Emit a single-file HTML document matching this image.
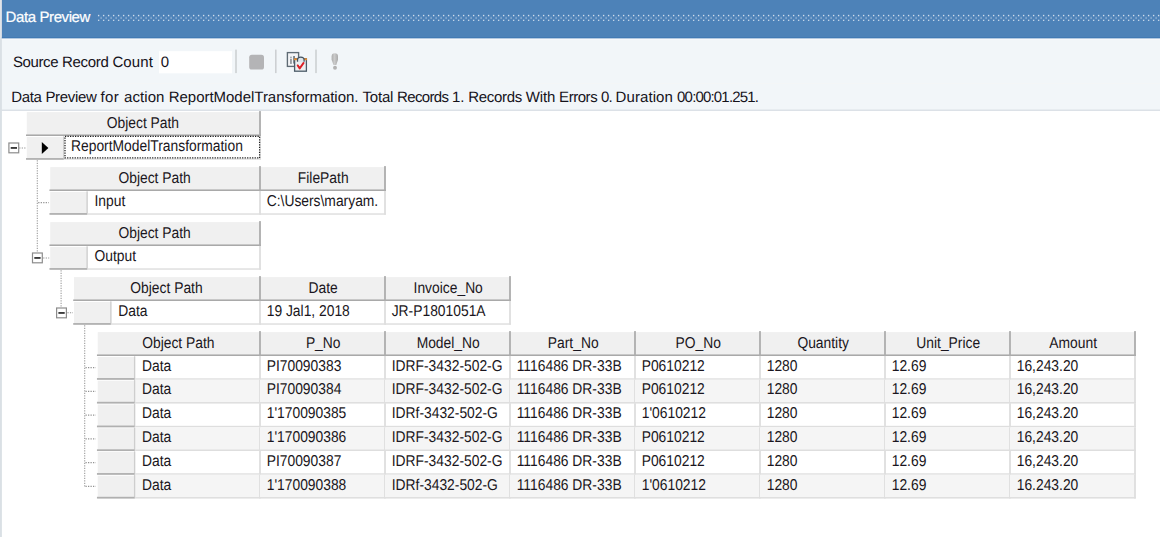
<!DOCTYPE html>
<html lang="en"><head><meta charset="utf-8"><title>Data Preview</title>
<style>
html,body{margin:0;padding:0;background:#fff;}
body{width:1160px;height:537px;overflow:hidden;}
svg{display:block;}
text{font-family:"Liberation Sans",sans-serif;fill:#000;white-space:pre;text-rendering:geometricPrecision;}
.seg{font-size:15px;fill:#15121a;}
.ttl{font-size:15px;fill:#fff;stroke:#fff;stroke-width:.2px;}
.g{font-size:13.85px;fill:#1a1620;}
.gc{font-size:13.85px;text-anchor:middle;fill:#1a1620;}
</style></head>
<body>
<svg width="1160" height="537" viewBox="0 0 1160 537">
<rect x="0.00" y="0.00" width="1160.00" height="537.00" fill="#ffffff"/>
<rect x="0.00" y="0.00" width="1160.00" height="110.90" fill="#f2f6f9"/>
<rect x="0.00" y="83.00" width="1160.00" height="1.00" fill="#f4f6f7"/>
<rect x="0.00" y="109.55" width="1160.00" height="1.35" fill="#dadfe5"/>
<rect x="0.00" y="0.00" width="1.90" height="537.00" fill="#dae0e5"/>
<rect x="0.00" y="0.00" width="1.90" height="38.50" fill="#e1e5e9"/>
<rect x="1.90" y="0.00" width="1160.00" height="38.50" fill="#4d82b8"/>
<rect x="1.90" y="37.10" width="1160.00" height="1.40" fill="#4279b4"/>
<rect x="1.90" y="38.50" width="1160.00" height="1.40" fill="#f7f9fb"/>
<defs><pattern id="gp" x="97.95" y="14.75" width="5" height="5" patternUnits="userSpaceOnUse"><rect x="0" y="0" width="1.3" height="1.3" fill="#f2f6fb"/><rect x="2.5" y="2.5" width="1.3" height="1.3" fill="#b3c9e2"/></pattern></defs>
<rect x="97.50" y="14.50" width="1062.50" height="6.40" fill="url(#gp)"/>
<text class="ttl" y="22.1"><tspan x="5.55" letter-spacing="-0.380">Data </tspan><tspan x="39.50" letter-spacing="-0.420">Preview</tspan></text>
<text class="seg" y="66.9"><tspan x="12.90" letter-spacing="-0.385">Source </tspan><tspan x="61.90" letter-spacing="-0.289">Record </tspan><tspan x="112.40" letter-spacing="0.110">Count</tspan></text>
<rect x="159.00" y="51.20" width="73.00" height="22.10" fill="#ffffff"/>
<text class="seg" x="160.7" y="66.9">0</text>
<rect x="235.20" y="49.60" width="1.60" height="23.50" fill="#cdd0d3"/>
<rect x="275.00" y="49.60" width="1.60" height="23.50" fill="#cdd0d3"/>
<rect x="315.20" y="49.60" width="1.60" height="23.50" fill="#cdd0d3"/>
<rect x="249.20" y="54.70" width="14.80" height="14.80" fill="#b4b4b6" rx="2.6"/>
<g transform="translate(285,50)"><rect x="2.4" y="2.6" width="11.2" height="13.8" fill="#f3f4f6" stroke="#5f6b75" stroke-width="1.35"/><rect x="5.1" y="6.7" width="1.7" height="1.1" fill="#8d9399"/><rect x="5.1" y="8.7" width="1.7" height="5.2" fill="#8d9399"/><rect x="8.1" y="6.0" width="1.9" height="7.6" fill="#7a848d"/><rect x="9.6" y="8.8" width="11.8" height="12.4" fill="#eceef0" stroke="#4c5b68" stroke-width="1.3"/><rect x="9.0" y="8.3" width="3.0" height="1.9" fill="#e08b33"/><rect x="19.0" y="8.3" width="3.0" height="1.9" fill="#e08b33"/><path d="M12.5 11.7 V10.0 A3.3 2.9 0 0 1 19.1 10.0 V11.7" fill="#dde4ea" stroke="#44525e" stroke-width="1.25"/><path d="M12.7 15.4 L14.7 18.4 L18.6 12.9" fill="none" stroke="#dc1f26" stroke-width="1.9" stroke-linecap="round" stroke-linejoin="round"/></g>
<defs><linearGradient id="exg" x1="0" x2="1" y1="0" y2="0"><stop offset="0" stop-color="#adadad"/><stop offset="0.45" stop-color="#cbcbcb"/><stop offset="1" stop-color="#a9a9a9"/></linearGradient></defs>
<g transform="translate(329,51)"><path d="M2.6 5.5 A3.2 3.2 0 0 1 9.0 5.5 L9.0 8.8 L7.3 14.1 H4.5 L2.6 8.8 Z" fill="url(#exg)"/><circle cx="6.0" cy="16.8" r="1.95" fill="#b2b2b2"/></g>
<text class="seg" y="102"><tspan x="11.30" letter-spacing="-0.350">Data </tspan><tspan x="45.40" letter-spacing="-0.315">Preview </tspan><tspan x="100.40" letter-spacing="0.482">for </tspan><tspan x="124.00" letter-spacing="0.072">action </tspan><tspan x="168.70" letter-spacing="-0.023">ReportModelTransformation. </tspan><tspan x="362.60" letter-spacing="-0.242">Total </tspan><tspan x="397.00" letter-spacing="-0.628">Records </tspan><tspan x="452.00" letter-spacing="-0.126">1. </tspan><tspan x="468.30" letter-spacing="-0.315">Records </tspan><tspan x="525.80" letter-spacing="-0.173">With </tspan><tspan x="559.10" letter-spacing="-0.457">Errors </tspan><tspan x="600.90" letter-spacing="-0.659">0. </tspan><tspan x="615.60" letter-spacing="0.071">Duration </tspan><tspan x="677.10" letter-spacing="-0.824">00:00:01.251.</tspan></text>
<line x1="19.20" y1="148.00" x2="25.50" y2="148.00" stroke="#929292" stroke-width="1.1" stroke-dasharray="1.25 1.25"/>
<line x1="37.30" y1="160.35" x2="37.30" y2="252.50" stroke="#9c9c9c" stroke-width="1.1" stroke-dasharray="1.25 1.25"/>
<line x1="38.20" y1="202.60" x2="48.80" y2="202.60" stroke="#929292" stroke-width="1.1" stroke-dasharray="1.25 1.25"/>
<line x1="43.20" y1="258.00" x2="49.20" y2="258.00" stroke="#929292" stroke-width="1.1" stroke-dasharray="1.25 1.25"/>
<line x1="61.10" y1="270.35" x2="61.10" y2="307.50" stroke="#9c9c9c" stroke-width="1.1" stroke-dasharray="1.25 1.25"/>
<line x1="67.40" y1="312.80" x2="73.00" y2="312.80" stroke="#929292" stroke-width="1.1" stroke-dasharray="1.25 1.25"/>
<line x1="84.70" y1="325.35" x2="84.70" y2="486.75" stroke="#9c9c9c" stroke-width="1.1" stroke-dasharray="1.25 1.25"/>
<line x1="85.50" y1="367.60" x2="95.80" y2="367.60" stroke="#929292" stroke-width="1.1" stroke-dasharray="1.25 1.25"/>
<line x1="85.50" y1="391.35" x2="95.80" y2="391.35" stroke="#929292" stroke-width="1.1" stroke-dasharray="1.25 1.25"/>
<line x1="85.50" y1="415.10" x2="95.80" y2="415.10" stroke="#929292" stroke-width="1.1" stroke-dasharray="1.25 1.25"/>
<line x1="85.50" y1="438.85" x2="95.80" y2="438.85" stroke="#929292" stroke-width="1.1" stroke-dasharray="1.25 1.25"/>
<line x1="85.50" y1="462.60" x2="95.80" y2="462.60" stroke="#929292" stroke-width="1.1" stroke-dasharray="1.25 1.25"/>
<line x1="85.50" y1="486.35" x2="95.80" y2="486.35" stroke="#929292" stroke-width="1.1" stroke-dasharray="1.25 1.25"/>
<rect x="8.90" y="143.00" width="9.8" height="9.8" fill="#fff" stroke="#8c8c8c" stroke-width="1.2"/>
<rect x="10.70" y="147.15" width="6.30" height="1.60" fill="#1a1a1a"/>
<rect x="32.50" y="253.00" width="9.8" height="9.8" fill="#fff" stroke="#8c8c8c" stroke-width="1.2"/>
<rect x="34.30" y="257.15" width="6.30" height="1.60" fill="#1a1a1a"/>
<rect x="56.60" y="308.00" width="9.8" height="9.8" fill="#fff" stroke="#8c8c8c" stroke-width="1.2"/>
<rect x="58.40" y="312.15" width="6.30" height="1.60" fill="#1a1a1a"/>
<rect x="26.80" y="112.10" width="233.20" height="23.90" fill="#f0f0f0"/>
<rect x="26.00" y="134.45" width="234.90" height="1.55" fill="#a9a9a9"/>
<rect x="259.10" y="111.10" width="1.80" height="24.90" fill="#acacac"/>
<rect x="64.30" y="158.30" width="196.60" height="1.45" fill="#dedede"/>
<rect x="259.10" y="136.00" width="1.80" height="23.75" fill="#dedede"/>
<rect x="26.80" y="137.00" width="37.50" height="22.75" fill="#f0f0f0"/>
<rect x="63.00" y="136.30" width="1.30" height="23.45" fill="#cecece"/>
<rect x="26.00" y="158.05" width="37.50" height="1.75" fill="#b0b0b0"/>
<rect x="65.00" y="136.30" width="194.60" height="21.65" fill="#fff" stroke="#1e1e1e" stroke-width="1.25" stroke-dasharray="1.25 1.25"/>
<path d="M41.8 142.00 L48.4 148.05 L41.8 154.10 Z" fill="#000"/>
<rect x="50.25" y="167.10" width="209.75" height="23.90" fill="#f0f0f0"/>
<rect x="261.00" y="167.10" width="124.00" height="23.90" fill="#f0f0f0"/>
<rect x="49.45" y="189.45" width="336.45" height="1.55" fill="#a9a9a9"/>
<rect x="259.10" y="166.10" width="1.80" height="24.90" fill="#acacac"/>
<rect x="384.10" y="166.10" width="1.80" height="24.90" fill="#acacac"/>
<rect x="87.75" y="213.30" width="173.15" height="1.45" fill="#dedede"/>
<rect x="259.10" y="191.00" width="1.80" height="23.75" fill="#dedede"/>
<rect x="260.00" y="213.30" width="125.90" height="1.45" fill="#dedede"/>
<rect x="384.10" y="191.00" width="1.80" height="23.75" fill="#dedede"/>
<rect x="50.25" y="192.00" width="37.50" height="22.75" fill="#f0f0f0"/>
<rect x="86.45" y="191.30" width="1.30" height="23.45" fill="#cecece"/>
<rect x="49.45" y="213.05" width="37.50" height="1.75" fill="#b0b0b0"/>
<rect x="50.25" y="222.10" width="209.75" height="23.90" fill="#f0f0f0"/>
<rect x="49.45" y="244.45" width="211.45" height="1.55" fill="#a9a9a9"/>
<rect x="259.10" y="221.10" width="1.80" height="24.90" fill="#acacac"/>
<rect x="87.75" y="268.30" width="173.15" height="1.45" fill="#dedede"/>
<rect x="259.10" y="246.00" width="1.80" height="23.75" fill="#dedede"/>
<rect x="50.25" y="247.00" width="37.50" height="22.75" fill="#f0f0f0"/>
<rect x="86.45" y="246.30" width="1.30" height="23.45" fill="#cecece"/>
<rect x="49.45" y="268.05" width="37.50" height="1.75" fill="#b0b0b0"/>
<rect x="74.00" y="277.10" width="186.00" height="23.90" fill="#f0f0f0"/>
<rect x="261.00" y="277.10" width="124.00" height="23.90" fill="#f0f0f0"/>
<rect x="386.00" y="277.10" width="124.00" height="23.90" fill="#f0f0f0"/>
<rect x="73.20" y="299.45" width="437.70" height="1.55" fill="#a9a9a9"/>
<rect x="259.10" y="276.10" width="1.80" height="24.90" fill="#acacac"/>
<rect x="384.10" y="276.10" width="1.80" height="24.90" fill="#acacac"/>
<rect x="509.10" y="276.10" width="1.80" height="24.90" fill="#acacac"/>
<rect x="111.50" y="323.30" width="149.40" height="1.45" fill="#dedede"/>
<rect x="259.10" y="301.00" width="1.80" height="23.75" fill="#dedede"/>
<rect x="260.00" y="323.30" width="125.90" height="1.45" fill="#dedede"/>
<rect x="384.10" y="301.00" width="1.80" height="23.75" fill="#dedede"/>
<rect x="385.00" y="323.30" width="125.90" height="1.45" fill="#dedede"/>
<rect x="509.10" y="301.00" width="1.80" height="23.75" fill="#dedede"/>
<rect x="74.00" y="302.00" width="37.50" height="22.75" fill="#f0f0f0"/>
<rect x="110.20" y="301.30" width="1.30" height="23.45" fill="#cecece"/>
<rect x="73.20" y="323.05" width="37.50" height="1.75" fill="#b0b0b0"/>
<rect x="97.75" y="332.10" width="162.25" height="23.90" fill="#f0f0f0"/>
<rect x="261.00" y="332.10" width="124.00" height="23.90" fill="#f0f0f0"/>
<rect x="386.00" y="332.10" width="124.00" height="23.90" fill="#f0f0f0"/>
<rect x="511.00" y="332.10" width="124.00" height="23.90" fill="#f0f0f0"/>
<rect x="636.00" y="332.10" width="124.00" height="23.90" fill="#f0f0f0"/>
<rect x="761.00" y="332.10" width="124.00" height="23.90" fill="#f0f0f0"/>
<rect x="886.00" y="332.10" width="124.00" height="23.90" fill="#f0f0f0"/>
<rect x="1011.00" y="332.10" width="124.00" height="23.90" fill="#f0f0f0"/>
<rect x="96.95" y="354.45" width="1038.95" height="1.55" fill="#a9a9a9"/>
<rect x="259.10" y="331.10" width="1.80" height="24.90" fill="#acacac"/>
<rect x="384.10" y="331.10" width="1.80" height="24.90" fill="#acacac"/>
<rect x="509.10" y="331.10" width="1.80" height="24.90" fill="#acacac"/>
<rect x="634.10" y="331.10" width="1.80" height="24.90" fill="#acacac"/>
<rect x="759.10" y="331.10" width="1.80" height="24.90" fill="#acacac"/>
<rect x="884.10" y="331.10" width="1.80" height="24.90" fill="#acacac"/>
<rect x="1009.10" y="331.10" width="1.80" height="24.90" fill="#acacac"/>
<rect x="1134.10" y="331.10" width="1.80" height="24.90" fill="#acacac"/>
<rect x="135.25" y="378.30" width="125.65" height="1.45" fill="#dedede"/>
<rect x="259.10" y="356.00" width="1.80" height="23.75" fill="#dedede"/>
<rect x="260.00" y="378.30" width="125.90" height="1.45" fill="#dedede"/>
<rect x="384.10" y="356.00" width="1.80" height="23.75" fill="#dedede"/>
<rect x="385.00" y="378.30" width="125.90" height="1.45" fill="#dedede"/>
<rect x="509.10" y="356.00" width="1.80" height="23.75" fill="#dedede"/>
<rect x="510.00" y="378.30" width="125.90" height="1.45" fill="#dedede"/>
<rect x="634.10" y="356.00" width="1.80" height="23.75" fill="#dedede"/>
<rect x="635.00" y="378.30" width="125.90" height="1.45" fill="#dedede"/>
<rect x="759.10" y="356.00" width="1.80" height="23.75" fill="#dedede"/>
<rect x="760.00" y="378.30" width="125.90" height="1.45" fill="#dedede"/>
<rect x="884.10" y="356.00" width="1.80" height="23.75" fill="#dedede"/>
<rect x="885.00" y="378.30" width="125.90" height="1.45" fill="#dedede"/>
<rect x="1009.10" y="356.00" width="1.80" height="23.75" fill="#dedede"/>
<rect x="1010.00" y="378.30" width="125.90" height="1.45" fill="#dedede"/>
<rect x="1134.10" y="356.00" width="1.80" height="23.75" fill="#dedede"/>
<rect x="97.75" y="357.00" width="37.50" height="22.75" fill="#f0f0f0"/>
<rect x="133.95" y="356.30" width="1.30" height="23.45" fill="#cecece"/>
<rect x="96.95" y="378.05" width="37.50" height="1.75" fill="#b0b0b0"/>
<rect x="135.25" y="379.75" width="124.75" height="23.75" fill="#f5f5f5"/>
<rect x="135.25" y="402.05" width="125.65" height="1.45" fill="#dedede"/>
<rect x="259.10" y="379.75" width="1.80" height="23.75" fill="#dedede"/>
<rect x="260.00" y="379.75" width="125.00" height="23.75" fill="#f5f5f5"/>
<rect x="260.00" y="402.05" width="125.90" height="1.45" fill="#dedede"/>
<rect x="384.10" y="379.75" width="1.80" height="23.75" fill="#dedede"/>
<rect x="385.00" y="379.75" width="125.00" height="23.75" fill="#f5f5f5"/>
<rect x="385.00" y="402.05" width="125.90" height="1.45" fill="#dedede"/>
<rect x="509.10" y="379.75" width="1.80" height="23.75" fill="#dedede"/>
<rect x="510.00" y="379.75" width="125.00" height="23.75" fill="#f5f5f5"/>
<rect x="510.00" y="402.05" width="125.90" height="1.45" fill="#dedede"/>
<rect x="634.10" y="379.75" width="1.80" height="23.75" fill="#dedede"/>
<rect x="635.00" y="379.75" width="125.00" height="23.75" fill="#f5f5f5"/>
<rect x="635.00" y="402.05" width="125.90" height="1.45" fill="#dedede"/>
<rect x="759.10" y="379.75" width="1.80" height="23.75" fill="#dedede"/>
<rect x="760.00" y="379.75" width="125.00" height="23.75" fill="#f5f5f5"/>
<rect x="760.00" y="402.05" width="125.90" height="1.45" fill="#dedede"/>
<rect x="884.10" y="379.75" width="1.80" height="23.75" fill="#dedede"/>
<rect x="885.00" y="379.75" width="125.00" height="23.75" fill="#f5f5f5"/>
<rect x="885.00" y="402.05" width="125.90" height="1.45" fill="#dedede"/>
<rect x="1009.10" y="379.75" width="1.80" height="23.75" fill="#dedede"/>
<rect x="1010.00" y="379.75" width="125.00" height="23.75" fill="#f5f5f5"/>
<rect x="1010.00" y="402.05" width="125.90" height="1.45" fill="#dedede"/>
<rect x="1134.10" y="379.75" width="1.80" height="23.75" fill="#dedede"/>
<rect x="97.75" y="380.75" width="37.50" height="22.75" fill="#f0f0f0"/>
<rect x="133.95" y="380.05" width="1.30" height="23.45" fill="#cecece"/>
<rect x="96.95" y="401.80" width="37.50" height="1.75" fill="#b0b0b0"/>
<rect x="135.25" y="425.80" width="125.65" height="1.45" fill="#dedede"/>
<rect x="259.10" y="403.50" width="1.80" height="23.75" fill="#dedede"/>
<rect x="260.00" y="425.80" width="125.90" height="1.45" fill="#dedede"/>
<rect x="384.10" y="403.50" width="1.80" height="23.75" fill="#dedede"/>
<rect x="385.00" y="425.80" width="125.90" height="1.45" fill="#dedede"/>
<rect x="509.10" y="403.50" width="1.80" height="23.75" fill="#dedede"/>
<rect x="510.00" y="425.80" width="125.90" height="1.45" fill="#dedede"/>
<rect x="634.10" y="403.50" width="1.80" height="23.75" fill="#dedede"/>
<rect x="635.00" y="425.80" width="125.90" height="1.45" fill="#dedede"/>
<rect x="759.10" y="403.50" width="1.80" height="23.75" fill="#dedede"/>
<rect x="760.00" y="425.80" width="125.90" height="1.45" fill="#dedede"/>
<rect x="884.10" y="403.50" width="1.80" height="23.75" fill="#dedede"/>
<rect x="885.00" y="425.80" width="125.90" height="1.45" fill="#dedede"/>
<rect x="1009.10" y="403.50" width="1.80" height="23.75" fill="#dedede"/>
<rect x="1010.00" y="425.80" width="125.90" height="1.45" fill="#dedede"/>
<rect x="1134.10" y="403.50" width="1.80" height="23.75" fill="#dedede"/>
<rect x="97.75" y="404.50" width="37.50" height="22.75" fill="#f0f0f0"/>
<rect x="133.95" y="403.80" width="1.30" height="23.45" fill="#cecece"/>
<rect x="96.95" y="425.55" width="37.50" height="1.75" fill="#b0b0b0"/>
<rect x="135.25" y="427.25" width="124.75" height="23.75" fill="#f5f5f5"/>
<rect x="135.25" y="449.55" width="125.65" height="1.45" fill="#dedede"/>
<rect x="259.10" y="427.25" width="1.80" height="23.75" fill="#dedede"/>
<rect x="260.00" y="427.25" width="125.00" height="23.75" fill="#f5f5f5"/>
<rect x="260.00" y="449.55" width="125.90" height="1.45" fill="#dedede"/>
<rect x="384.10" y="427.25" width="1.80" height="23.75" fill="#dedede"/>
<rect x="385.00" y="427.25" width="125.00" height="23.75" fill="#f5f5f5"/>
<rect x="385.00" y="449.55" width="125.90" height="1.45" fill="#dedede"/>
<rect x="509.10" y="427.25" width="1.80" height="23.75" fill="#dedede"/>
<rect x="510.00" y="427.25" width="125.00" height="23.75" fill="#f5f5f5"/>
<rect x="510.00" y="449.55" width="125.90" height="1.45" fill="#dedede"/>
<rect x="634.10" y="427.25" width="1.80" height="23.75" fill="#dedede"/>
<rect x="635.00" y="427.25" width="125.00" height="23.75" fill="#f5f5f5"/>
<rect x="635.00" y="449.55" width="125.90" height="1.45" fill="#dedede"/>
<rect x="759.10" y="427.25" width="1.80" height="23.75" fill="#dedede"/>
<rect x="760.00" y="427.25" width="125.00" height="23.75" fill="#f5f5f5"/>
<rect x="760.00" y="449.55" width="125.90" height="1.45" fill="#dedede"/>
<rect x="884.10" y="427.25" width="1.80" height="23.75" fill="#dedede"/>
<rect x="885.00" y="427.25" width="125.00" height="23.75" fill="#f5f5f5"/>
<rect x="885.00" y="449.55" width="125.90" height="1.45" fill="#dedede"/>
<rect x="1009.10" y="427.25" width="1.80" height="23.75" fill="#dedede"/>
<rect x="1010.00" y="427.25" width="125.00" height="23.75" fill="#f5f5f5"/>
<rect x="1010.00" y="449.55" width="125.90" height="1.45" fill="#dedede"/>
<rect x="1134.10" y="427.25" width="1.80" height="23.75" fill="#dedede"/>
<rect x="97.75" y="428.25" width="37.50" height="22.75" fill="#f0f0f0"/>
<rect x="133.95" y="427.55" width="1.30" height="23.45" fill="#cecece"/>
<rect x="96.95" y="449.30" width="37.50" height="1.75" fill="#b0b0b0"/>
<rect x="135.25" y="473.30" width="125.65" height="1.45" fill="#dedede"/>
<rect x="259.10" y="451.00" width="1.80" height="23.75" fill="#dedede"/>
<rect x="260.00" y="473.30" width="125.90" height="1.45" fill="#dedede"/>
<rect x="384.10" y="451.00" width="1.80" height="23.75" fill="#dedede"/>
<rect x="385.00" y="473.30" width="125.90" height="1.45" fill="#dedede"/>
<rect x="509.10" y="451.00" width="1.80" height="23.75" fill="#dedede"/>
<rect x="510.00" y="473.30" width="125.90" height="1.45" fill="#dedede"/>
<rect x="634.10" y="451.00" width="1.80" height="23.75" fill="#dedede"/>
<rect x="635.00" y="473.30" width="125.90" height="1.45" fill="#dedede"/>
<rect x="759.10" y="451.00" width="1.80" height="23.75" fill="#dedede"/>
<rect x="760.00" y="473.30" width="125.90" height="1.45" fill="#dedede"/>
<rect x="884.10" y="451.00" width="1.80" height="23.75" fill="#dedede"/>
<rect x="885.00" y="473.30" width="125.90" height="1.45" fill="#dedede"/>
<rect x="1009.10" y="451.00" width="1.80" height="23.75" fill="#dedede"/>
<rect x="1010.00" y="473.30" width="125.90" height="1.45" fill="#dedede"/>
<rect x="1134.10" y="451.00" width="1.80" height="23.75" fill="#dedede"/>
<rect x="97.75" y="452.00" width="37.50" height="22.75" fill="#f0f0f0"/>
<rect x="133.95" y="451.30" width="1.30" height="23.45" fill="#cecece"/>
<rect x="96.95" y="473.05" width="37.50" height="1.75" fill="#b0b0b0"/>
<rect x="135.25" y="474.75" width="124.75" height="23.75" fill="#f5f5f5"/>
<rect x="135.25" y="497.05" width="125.65" height="1.45" fill="#dedede"/>
<rect x="259.10" y="474.75" width="1.80" height="23.75" fill="#dedede"/>
<rect x="260.00" y="474.75" width="125.00" height="23.75" fill="#f5f5f5"/>
<rect x="260.00" y="497.05" width="125.90" height="1.45" fill="#dedede"/>
<rect x="384.10" y="474.75" width="1.80" height="23.75" fill="#dedede"/>
<rect x="385.00" y="474.75" width="125.00" height="23.75" fill="#f5f5f5"/>
<rect x="385.00" y="497.05" width="125.90" height="1.45" fill="#dedede"/>
<rect x="509.10" y="474.75" width="1.80" height="23.75" fill="#dedede"/>
<rect x="510.00" y="474.75" width="125.00" height="23.75" fill="#f5f5f5"/>
<rect x="510.00" y="497.05" width="125.90" height="1.45" fill="#dedede"/>
<rect x="634.10" y="474.75" width="1.80" height="23.75" fill="#dedede"/>
<rect x="635.00" y="474.75" width="125.00" height="23.75" fill="#f5f5f5"/>
<rect x="635.00" y="497.05" width="125.90" height="1.45" fill="#dedede"/>
<rect x="759.10" y="474.75" width="1.80" height="23.75" fill="#dedede"/>
<rect x="760.00" y="474.75" width="125.00" height="23.75" fill="#f5f5f5"/>
<rect x="760.00" y="497.05" width="125.90" height="1.45" fill="#dedede"/>
<rect x="884.10" y="474.75" width="1.80" height="23.75" fill="#dedede"/>
<rect x="885.00" y="474.75" width="125.00" height="23.75" fill="#f5f5f5"/>
<rect x="885.00" y="497.05" width="125.90" height="1.45" fill="#dedede"/>
<rect x="1009.10" y="474.75" width="1.80" height="23.75" fill="#dedede"/>
<rect x="1010.00" y="474.75" width="125.00" height="23.75" fill="#f5f5f5"/>
<rect x="1010.00" y="497.05" width="125.90" height="1.45" fill="#dedede"/>
<rect x="1134.10" y="474.75" width="1.80" height="23.75" fill="#dedede"/>
<rect x="97.75" y="475.75" width="37.50" height="22.75" fill="#f0f0f0"/>
<rect x="133.95" y="475.05" width="1.30" height="23.45" fill="#cecece"/>
<rect x="96.95" y="496.80" width="37.50" height="1.75" fill="#b0b0b0"/>
<g transform="scale(1,1.13)"><text class="gc" x="142.90" y="113.45">Object Path</text><text class="g" x="71.00" y="133.41">ReportModelTransformation</text><text class="gc" x="154.62" y="162.12">Object Path</text><text class="gc" x="323.20" y="162.12">FilePath</text><text class="g" x="94.45" y="182.08">Input</text><text class="g" x="266.70" y="182.08">C:\Users\maryam.</text><text class="gc" x="154.62" y="210.80">Object Path</text><text class="g" x="94.45" y="230.75">Output</text><text class="gc" x="166.50" y="259.47">Object Path</text><text class="gc" x="323.20" y="259.47">Date</text><text class="gc" x="448.20" y="259.47">Invoice_No</text><text class="g" x="118.20" y="279.42">Data</text><text class="g" x="266.70" y="279.42">19 Jal1, 2018</text><text class="g" x="391.70" y="279.42">JR-P1801051A</text><text class="gc" x="178.38" y="308.14">Object Path</text><text class="gc" x="323.20" y="308.14">P_No</text><text class="gc" x="448.20" y="308.14">Model_No</text><text class="gc" x="573.20" y="308.14">Part_No</text><text class="gc" x="698.20" y="308.14">PO_No</text><text class="gc" x="823.20" y="308.14">Quantity</text><text class="gc" x="948.20" y="308.14">Unit_Price</text><text class="gc" x="1073.20" y="308.14">Amount</text><text class="g" x="141.95" y="328.10">Data</text><text class="g" x="266.70" y="328.10">PI70090383</text><text class="g" x="391.70" y="328.10">IDRF-3432-502-G</text><text class="g" x="516.70" y="328.10">1116486 DR-33B</text><text class="g" x="641.70" y="328.10">P0610212</text><text class="g" x="766.70" y="328.10">1280</text><text class="g" x="891.70" y="328.10">12.69</text><text class="g" x="1016.70" y="328.10">16,243.20</text><text class="g" x="141.95" y="349.12">Data</text><text class="g" x="266.70" y="349.12">PI70090384</text><text class="g" x="391.70" y="349.12">IDRF-3432-502-G</text><text class="g" x="516.70" y="349.12">1116486 DR-33B</text><text class="g" x="641.70" y="349.12">P0610212</text><text class="g" x="766.70" y="349.12">1280</text><text class="g" x="891.70" y="349.12">12.69</text><text class="g" x="1016.70" y="349.12">16,243.20</text><text class="g" x="141.95" y="370.13">Data</text><text class="g" x="266.70" y="370.13">1'170090385</text><text class="g" x="391.70" y="370.13">IDRf-3432-502-G</text><text class="g" x="516.70" y="370.13">1116486 DR-33B</text><text class="g" x="641.70" y="370.13">1'0610212</text><text class="g" x="766.70" y="370.13">1280</text><text class="g" x="891.70" y="370.13">12.69</text><text class="g" x="1016.70" y="370.13">16,243.20</text><text class="g" x="141.95" y="391.15">Data</text><text class="g" x="266.70" y="391.15">1'170090386</text><text class="g" x="391.70" y="391.15">IDRF-3432-502-G</text><text class="g" x="516.70" y="391.15">1116486 DR-33B</text><text class="g" x="641.70" y="391.15">P0610212</text><text class="g" x="766.70" y="391.15">1280</text><text class="g" x="891.70" y="391.15">12.69</text><text class="g" x="1016.70" y="391.15">16,243.20</text><text class="g" x="141.95" y="412.17">Data</text><text class="g" x="266.70" y="412.17">PI70090387</text><text class="g" x="391.70" y="412.17">IDRF-3432-502-G</text><text class="g" x="516.70" y="412.17">1116486 DR-33B</text><text class="g" x="641.70" y="412.17">P0610212</text><text class="g" x="766.70" y="412.17">1280</text><text class="g" x="891.70" y="412.17">12.69</text><text class="g" x="1016.70" y="412.17">16,243.20</text><text class="g" x="141.95" y="433.19">Data</text><text class="g" x="266.70" y="433.19">1'170090388</text><text class="g" x="391.70" y="433.19">IDRf-3432-502-G</text><text class="g" x="516.70" y="433.19">1116486 DR-33B</text><text class="g" x="641.70" y="433.19">1'0610212</text><text class="g" x="766.70" y="433.19">1280</text><text class="g" x="891.70" y="433.19">12.69</text><text class="g" x="1016.70" y="433.19">16.243.20</text></g>
</svg>
</body></html>
